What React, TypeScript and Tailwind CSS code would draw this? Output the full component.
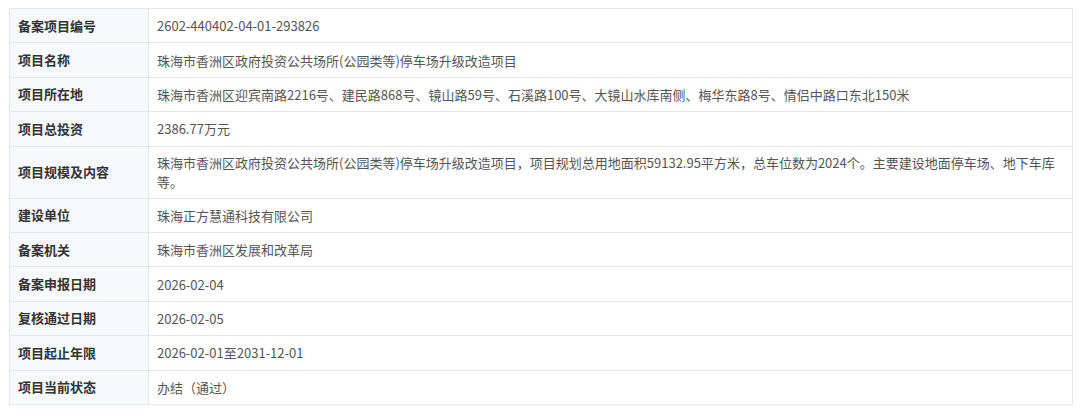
const rows: [string, string][] = [
  ["备案项目编号", "2602-440402-04-01-293826"],
  ["项目名称", "珠海市香洲区政府投资公共场所(公园类等)停车场升级改造项目"],
  ["项目所在地", "珠海市香洲区迎宾南路2216号、建民路868号、镜山路59号、石溪路100号、大镜山水库南侧、梅华东路8号、情侣中路口东北150米"],
  ["项目总投资", "2386.77万元"],
  [
    "项目规模及内容",
    "珠海市香洲区政府投资公共场所(公园类等)停车场升级改造项目，项目规划总用地面积59132.95平方米，总车位数为2024个。主要建设地面停车场、地下车库等。",
  ],
  ["建设单位", "珠海正方慧通科技有限公司"],
  ["备案机关", "珠海市香洲区发展和改革局"],
  ["备案申报日期", "2026-02-04"],
  ["复核通过日期", "2026-02-05"],
  ["项目起止年限", "2026-02-01至2031-12-01"],
  ["项目当前状态", "办结（通过）"],
];

export default function App() {
  return (
    <div
      className="h-[418px] w-[1080px] bg-white pl-[9px] pt-[8px]"
      style={{ fontFamily: '"Noto Sans CJK SC", "Noto Sans", sans-serif' }}
    >
      <table className="w-[1064px] border-collapse text-[13px] leading-[18px]">
        <tbody>
          {rows.map(([label, value], i) => (
            <tr key={label} className={i === 4 ? "h-[52px]" : "h-[34.4px]"}>
              <td className="w-[139px] border border-[#e4e6e8] bg-[#f6fafc] px-2 py-0 align-middle font-semibold text-[#333]">
                <div className="leading-[18px]">{label}</div>
              </td>
              <td className="border border-[#e4e6e8] py-0 pl-2 pr-3 align-middle text-[#555]">
                <div className="leading-[19px]">{value}</div>
              </td>
            </tr>
          ))}
        </tbody>
      </table>
    </div>
  );
}
